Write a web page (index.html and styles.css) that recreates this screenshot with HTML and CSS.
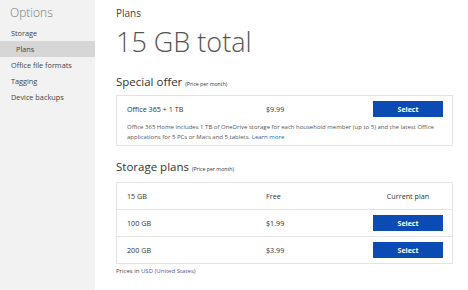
FILE: index.html
```html
<!DOCTYPE html>
<html lang="en">

<head>
  <meta charset="UTF-8" />
  <meta name="viewport" content="width=device-width, initial-scale=1.0" />
  <title>Options - Plans</title>
  <link rel="stylesheet" href="styles.css">
</head>

<body>
  <div class="page">
    <aside class="sidebar">
      <div class="sidebar-title">Options</div>
      <a href="#" class="side-link">Storage</a>
      <a href="#" class="side-link sub active">Plans</a>
      <a href="#" class="side-link">Office file formats</a>
      <a href="#" class="side-link">Tagging</a>
      <a href="#" class="side-link">Device backups</a>
    </aside>

    <main class="content">
      <div class="crumb">Plans</div>
      <h1 class="total">15 GB total</h1>

      <h2 class="section-title">Special offer <span class="note">(Price per month)</span></h2>
      <div class="box offer">
        <div class="row">
          <span class="col-name">Office 365 + 1 TB</span>
          <span class="col-price">$9.99</span>
          <span class="col-action"><button class="select-btn">Select</button></span>
        </div>
        <p class="offer-desc">Office 365 Home includes 1 TB of OneDrive storage for each household member (up to 5) and the latest Office applications for 5 PCs or Macs and 5 tablets. <a href="#" class="learn">Learn more</a></p>
      </div>

      <h2 class="section-title second">Storage plans <span class="note">(Price per month)</span></h2>
      <div class="box plans">
        <div class="row plan-row">
          <span class="col-name">15 GB</span>
          <span class="col-price">Free</span>
          <span class="col-action current">Current plan</span>
        </div>
        <div class="row plan-row">
          <span class="col-name">100 GB</span>
          <span class="col-price">$1.99</span>
          <span class="col-action"><button class="select-btn">Select</button></span>
        </div>
        <div class="row plan-row">
          <span class="col-name">200 GB</span>
          <span class="col-price">$3.99</span>
          <span class="col-action"><button class="select-btn">Select</button></span>
        </div>
      </div>

      <p class="currency">Prices in <a href="#">USD (United States)</a></p>
    </main>
  </div>
</body>

</html>
```

FILE: styles.css
```css
* {
  margin: 0;
  padding: 0;
  box-sizing: border-box;
  font-family: 'Open Sans', 'Noto Sans', sans-serif;
}

body {
  background-color: #fff;
  color: #333;
}

.page {
  display: flex;
  min-height: 290px;
}

.sidebar {
  width: 95px;
  flex-shrink: 0;
  background-color: #f2f2f2;
  display: flex;
  flex-direction: column;
}

.sidebar-title {
  font-size: 12px;
  font-weight: 300;
  color: #777;
  line-height: 25px;
  padding-left: 10px;
}

.side-link {
  display: block;
  font-size: 7.3px;
  line-height: 16px;
  color: #444;
  text-decoration: none;
  padding-left: 11px;
}

.side-link.sub {
  padding-left: 16px;
}

.side-link.active {
  background-color: #d6d6d6;
}

.content {
  flex: 1;
  padding: 6px 15px 0 21px;
}

.crumb {
  font-size: 10px;
  line-height: 14px;
  color: #444;
}

.total {
  font-size: 27px;
  font-weight: 300;
  line-height: 28px;
  color: #555;
  margin-top: 8px;
}

.section-title {
  font-size: 11.5px;
  font-weight: 400;
  line-height: 14px;
  color: #333;
  margin-top: 19px;
}

.section-title.second {
  margin-top: 14px;
}

.note {
  font-size: 5.2px;
  line-height: 1;
}

.box {
  border: 1px solid #e3e3e3;
  margin-top: 6px;
}

.plans {
  margin-top: 8px;
}

.row {
  display: flex;
  align-items: center;
  font-size: 7.2px;
  color: #333;
  padding: 0 9px 0 10px;
}

.offer .row {
  padding-top: 5px;
}

.plan-row {
  height: 27px;
  border-top: 1px solid #e3e3e3;
}

.plan-row:first-child {
  border-top: none;
  height: 26px;
}

.col-name {
  width: 139px;
}

.col-price {
  flex: 1;
}

.col-action {
  width: 70px;
  text-align: center;
}

.select-btn {
  width: 70px;
  height: 16px;
  border: none;
  background-color: #0b4bb3;
  color: #fff;
  font-size: 7px;
  font-weight: 700;
  cursor: pointer;
}

.offer-desc {
  font-size: 6px;
  line-height: 10px;
  color: #555;
  padding: 5px 6px 3px 10px;
}

.learn {
  color: #2a62b8;
  text-decoration: none;
}

.currency {
  font-size: 6px;
  line-height: 10px;
  color: #444;
  margin-top: 2px;
}

.currency a {
  color: #4b55a8;
  text-decoration: none;
}
```
